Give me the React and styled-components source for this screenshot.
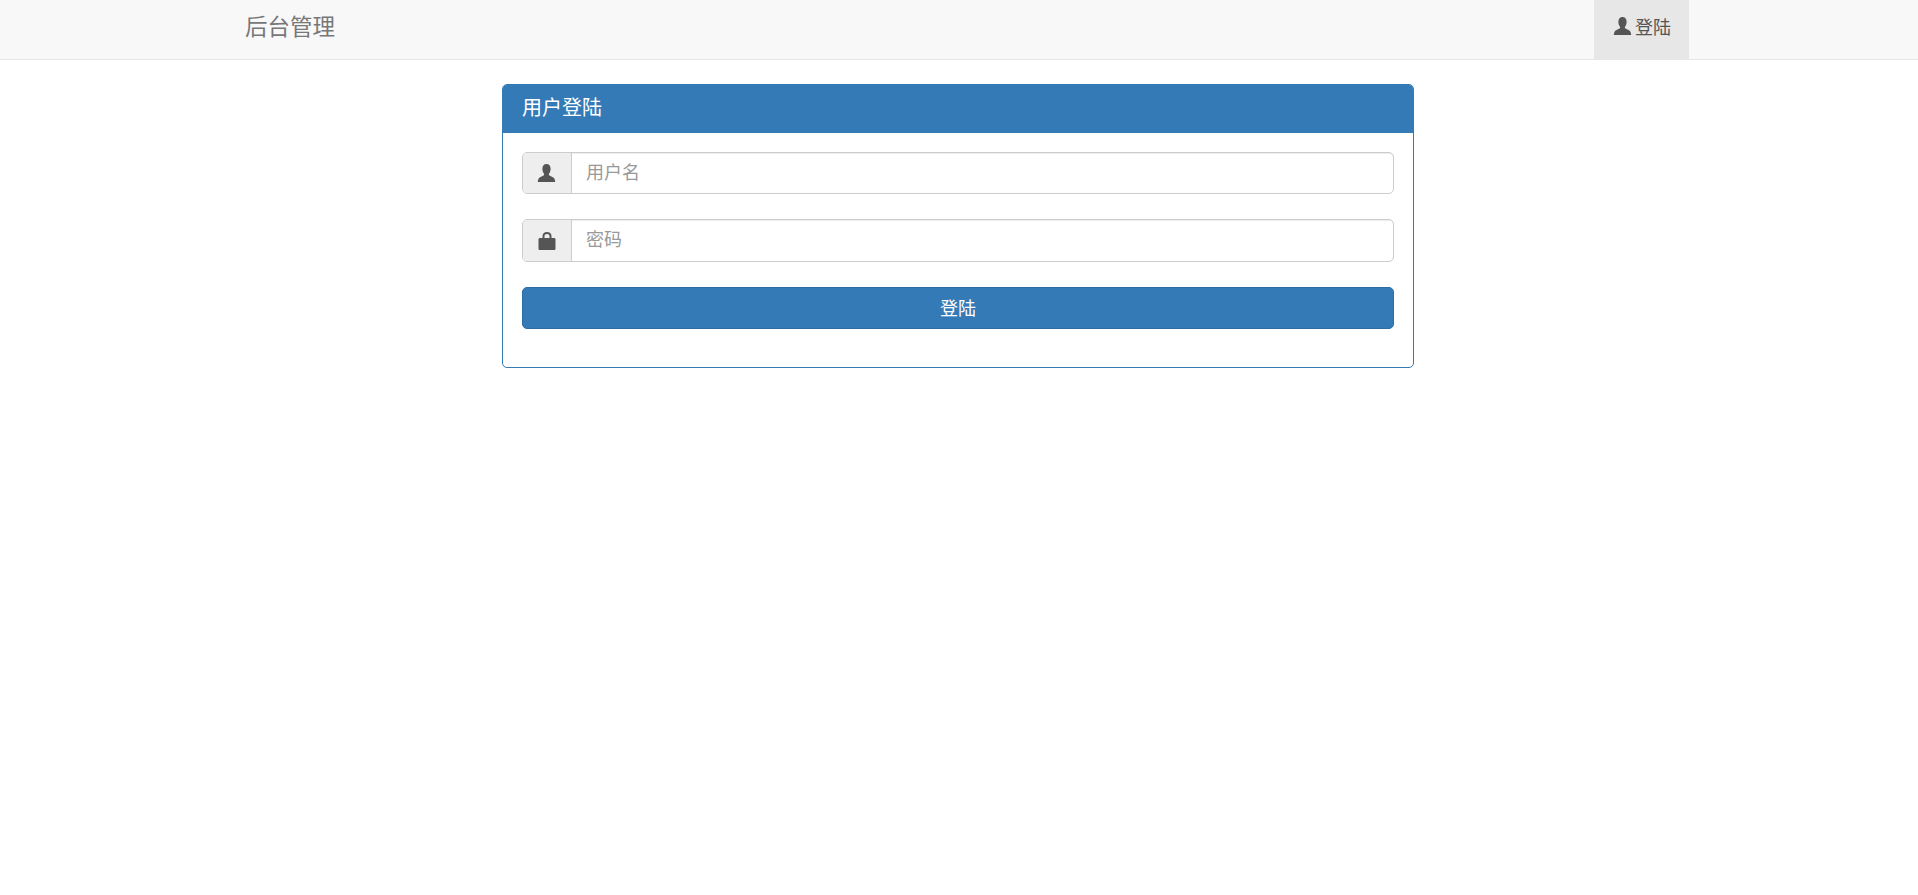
import styled, { createGlobalStyle } from 'styled-components';

const GlobalStyle = createGlobalStyle`
  body {
    margin: 0;
    background: #fff;
    font-family: "Liberation Sans", "Noto Sans CJK SC", sans-serif;
    font-size: 18px;
    color: #333;
  }
  * { box-sizing: border-box; }
`;

const Navbar = styled.nav`
  height: 60px;
  background-color: #f8f8f8;
  border-bottom: 1px solid #e7e7e7;
`;

const NavInner = styled.div`
  width: 1460px;
  height: 59px;
  margin: 0 auto;
  display: flex;
  justify-content: space-between;
`;

const Brand = styled.a`
  padding: 0 16px;
  line-height: 55px;
  font-size: 22.5px;
  color: #777;
`;

const NavLink = styled.a`
  display: flex;
  align-items: center;
  gap: 3px;
  width: 95px;
  padding: 0 0 8px 19px;
  background-color: #e7e7e7;
  color: #555;
`;

const UserIcon = () => (
  <svg width="19" height="18" viewBox="0 0 18 18" fill="#555">
    <path d="M9 0C6.500 0 4.900 1.900 4.900 4.700c0 2 .6 3.800 1.500 4.900.4.600.3 1.500-.3 1.900-1.500.9-3.500 1.400-4.500 2.500C.8 15 .4 16.500.3 18h17.400c-.1-1.500-.5-3-1.300-4-1-1.100-3-1.600-4.500-2.500-.6-.4-.7-1.300-.3-1.900.9-1.100 1.500-2.900 1.500-4.900C13.100 1.900 11.500 0 9 0z" />
  </svg>
);

const LockIcon = () => (
  <svg width="18" height="18" viewBox="0 0 18 18" fill="#555">
    <path fillRule="evenodd" d="M4.500 6V4C4.500 1.500 6.500 0 9 0s4.500 1.500 4.500 4v2h2.500c1 0 1.500.5 1.500 1.500v9c0 1-.5 1.500-1.500 1.500H2c-1 0-1.500-.5-1.500-1.500v-9C.5 6.500 1 6 2 6zM6.500 6h5V4c0-1.200-1-2-2.500-2s-2.500.8-2.500 2z" />
  </svg>
);

const Main = styled.main`
  padding: 24px 2px 0 0;
`;

const Panel = styled.section`
  width: 912px;
  height: 284px;
  margin: 0 auto;
  border: 1px solid #337ab7;
  border-radius: 5px;
  overflow: hidden;
`;

const PanelHeading = styled.h3`
  height: 48px;
  margin: 0;
  padding: 0 19px;
  background-color: #337ab7;
  color: #fff;
  font-size: 20px;
  font-weight: 400;
  line-height: 46px;
`;

const PanelBody = styled.div`
  display: flex;
  flex-direction: column;
  padding: 19px;
`;

const InputGroup = styled.div`
  display: flex;
  height: ${({ $tall }) => ($tall ? '43px' : '42px')};
  margin-bottom: 25px;
  border: 1.5px solid #ccc;
  border-radius: 5px;
  box-shadow: inset 0 1px 1px rgba(0, 0, 0, 0.075);
  overflow: hidden;
`;

const Addon = styled.span`
  display: flex;
  align-items: center;
  justify-content: center;
  width: 48.5px;
  flex: none;
  background-color: #eee;
  border-right: 1.5px solid #ccc;
`;

const Field = styled.input`
  flex: 1;
  min-width: 0;
  padding: 0 14.5px;
  border: 0;
  outline: 0;
  background: transparent;
  font: inherit;
  color: #555;
  &::placeholder {
    color: #999;
    opacity: 1;
  }
`;

const SubmitButton = styled.button`
  height: 42px;
  padding: 0 0 3px;
  border: 1px solid #2e6da4;
  border-radius: 5px;
  background-color: #337ab7;
  color: #fff;
  font: inherit;
`;

export default function App() {
  return (
    <>
      <GlobalStyle />
      <Navbar>
        <NavInner>
          <Brand>后台管理</Brand>
          <NavLink>
            <UserIcon />
            登陆
          </NavLink>
        </NavInner>
      </Navbar>
      <Main>
        <Panel>
          <PanelHeading>用户登陆</PanelHeading>
          <PanelBody>
            <InputGroup>
              <Addon>
                <UserIcon />
              </Addon>
              <Field placeholder="用户名" />
            </InputGroup>
            <InputGroup $tall>
              <Addon>
                <LockIcon />
              </Addon>
              <Field type="password" placeholder="密码" />
            </InputGroup>
            <SubmitButton>登陆</SubmitButton>
          </PanelBody>
        </Panel>
      </Main>
    </>
  );
}
